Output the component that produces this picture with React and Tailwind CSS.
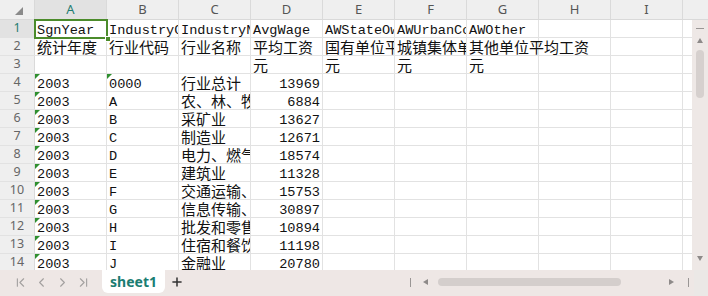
import React from "react";
import { ChevronFirst, ChevronLeft, ChevronRight, ChevronLast, Plus } from "lucide-react";

const COLS = ["A", "B", "C", "D", "E", "F", "G", "H", "I"];

const ROWS = [
  ["SgnYear", "IndustryCode", "IndustryName", "AvgWage", "AWStateOwned", "AWUrbanCollective", "AWOther"],
  ["统计年度", "行业代码", "行业名称", "平均工资", "国有单位平均工资", "城镇集体单位平均工资", "其他单位平均工资"],
  ["", "", "", "元", "元", "元", "元"],
  ["2003", "0000", "行业总计", 13969],
  ["2003", "A", "农、林、牧、渔业", 6884],
  ["2003", "B", "采矿业", 13627],
  ["2003", "C", "制造业", 12671],
  ["2003", "D", "电力、燃气及水的生产和供应业", 18574],
  ["2003", "E", "建筑业", 11328],
  ["2003", "F", "交通运输、仓储和邮政业", 15753],
  ["2003", "G", "信息传输、计算机服务和软件业", 30897],
  ["2003", "H", "批发和零售业", 10894],
  ["2003", "I", "住宿和餐饮业", 11198],
  ["2003", "J", "金融业", 20780],
];

const CJK = /[\u3000-\u9fff\uff00-\uffef]/;

function Cell({ value, r, c }) {
  const isNum = typeof value === "number";
  const isCjk = typeof value === "string" && CJK.test(value);
  const overflow = r === 1 && c === 6;
  const tri = r >= 3 && (c === 0 || (c === 1 && r === 3));
  return (
    <div
      className={
        "relative w-[72px] h-full shrink-0 border-r border-[#e2e2e2] flex items-end pl-[2px] pr-[2px] whitespace-nowrap " +
        (overflow ? "overflow-visible z-10 " : "overflow-hidden ") +
        (isNum ? "justify-end " : "")
      }
    >
      {tri && (
        <div className="absolute top-0 left-0 w-0 h-0 border-t-[5px] border-t-[#2f8f2f] border-r-[5px] border-r-transparent" />
      )}
      {value !== "" && (
        <span
          className={
            isCjk
              ? "font-['Noto_Sans_CJK_SC',sans-serif] text-[15px] leading-[17px] text-[#111]"
              : "font-['Liberation_Mono',monospace] text-[13.6px] leading-[13px] text-[#111]"
          }
        >
          {value}
        </span>
      )}
    </div>
  );
}

function Row({ r, data }) {
  return (
    <div className="flex h-[18px] shrink-0 border-b border-[#e2e2e2]">
      <div
        className={
          "w-[35px] shrink-0 h-full border-r border-[#dadada] flex items-center justify-center font-['Noto_Sans',sans-serif] text-[12.5px] " +
          (r === 0 ? "bg-[#e2e2e2] text-[#1f7d72]" : "bg-[#efefef] text-[#666]")
        }
      >
        {r + 1}
      </div>
      {COLS.map((col, c) => (
        <Cell key={col} r={r} c={c} value={data[c] === undefined ? "" : data[c]} />
      ))}
      <div className="flex-1" />
    </div>
  );
}

function Tri({ dir, className = "" }) {
  const pts = {
    up: "0,5 3,0 6,5",
    down: "0,0 6,0 3,5",
    left: "5,0 5,6 0,3",
    right: "0,0 0,6 5,3",
  }[dir];
  return (
    <svg width="6" height="6" viewBox="0 0 6 6" className={className}>
      <polygon points={pts} fill="#8e8a89" />
    </svg>
  );
}

export default function App() {
  return (
    <div className="relative w-[708px] h-[296px] flex flex-col overflow-hidden bg-white select-none">
      {/* column header */}
      <div className="flex h-[20px] shrink-0 bg-[#efefef] border-b border-[#d9d9d9]">
        <div className="w-[35px] shrink-0 border-r border-[#d9d9d9] flex items-center justify-center">
          <svg width="8" height="8" viewBox="0 0 8 8" className="ml-[3px] mt-[2px]">
            <polygon points="8,0 8,8 0,8" fill="#8a8a8a" />
          </svg>
        </div>
        {COLS.map((col, i) => (
          <div
            key={col}
            className={
              "w-[72px] shrink-0 border-r border-[#dadada] flex items-center justify-center font-['Noto_Sans',sans-serif] text-[13px] " +
              (i === 0 ? "bg-[#e2e2e2] text-[#1f7d72]" : "text-[#555]")
            }
          >
            {col}
          </div>
        ))}
        <div className="flex-1" />
      </div>

      {/* body */}
      <div className="flex flex-1 min-h-0">
        <div className="flex-1 flex flex-col overflow-hidden">
          {ROWS.map((data, r) => (
            <Row key={r} r={r} data={data} />
          ))}
        </div>
        <div className="w-[16px] shrink-0 bg-[#eee8e6] flex flex-col items-center">
          <div className="mt-[8px] w-[8px] h-px bg-[#9a9695]" />
          <Tri dir="up" className="mt-[9px]" />
          <div className="mt-[6px] w-[8px] h-[48px] rounded-full bg-[#d6d0ce]" />
          <div className="flex-1" />
          <Tri dir="down" className="mb-[8px]" />
        </div>
      </div>

      {/* tab bar */}
      <div className="flex h-[26px] shrink-0 bg-[#eee7e5] items-start">
        <div className="flex items-center h-[24px] pl-[10px] text-[#a3a09f]">
          <div className="w-[21px] flex justify-center"><ChevronFirst size={15} strokeWidth={1.8} /></div>
          <div className="w-[21px] flex justify-center"><ChevronLeft size={15} strokeWidth={1.8} /></div>
          <div className="w-[21px] flex justify-center"><ChevronRight size={15} strokeWidth={1.8} /></div>
          <div className="w-[21px] flex justify-center"><ChevronLast size={15} strokeWidth={1.8} /></div>
        </div>
        <div className="ml-[8px] w-[63px] h-[23px] bg-white rounded-b-[6px] flex items-center justify-center font-['Noto_Sans',sans-serif] font-bold text-[14px] text-[#1b7d72]">
          sheet1
        </div>
        <div className="w-[24px] h-[24px] flex items-center justify-center text-[#333]">
          <Plus size={14} strokeWidth={2.6} />
        </div>
        <div className="ml-auto flex items-center h-[24px] pl-[2px]">
          <div className="w-[12px] flex justify-center"><div className="w-px h-[9px] bg-[#9a9695]" /></div>
          <div className="ml-[4px] w-[12px] flex justify-center"><Tri dir="left" /></div>
          <div className="ml-[6px] w-[183px] h-[8px] rounded-full bg-[#d4cecc]" />
          <div className="ml-[45px] w-[12px] flex justify-center"><Tri dir="right" /></div>
          <div className="ml-[4px] w-[12px] flex justify-center"><div className="w-px h-[9px] bg-[#9a9695]" /></div>
        </div>
        <div className="w-[14px] h-full bg-[#ebe8e6]" />
      </div>

      {/* active cell selection overlay */}
      <div className="absolute left-[34px] top-[19px] w-[74px] h-[20px] border-2 border-[#4b8b2b] z-20 pointer-events-none">
        <div className="absolute right-[-5px] bottom-[-5px] w-[6px] h-[6px] bg-[#4b8b2b] border border-white" />
      </div>
    </div>
  );
}
